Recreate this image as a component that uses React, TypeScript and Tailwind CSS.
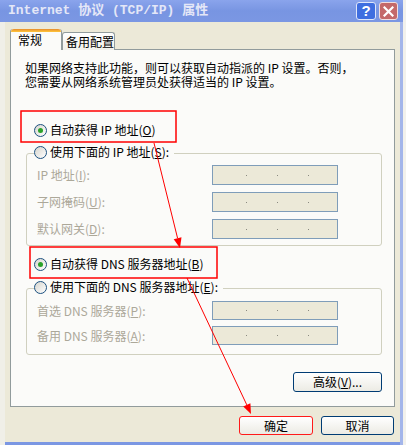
const Radio = ({ checked = false }: { checked?: boolean }) => (
  <span className="flex h-[13px] w-[13px] shrink-0 items-center justify-center rounded-full border border-[#1c5180] bg-linear-to-br from-[#d6d5ce] to-white">
    {checked && <span className="h-[5px] w-[5px] rounded-full bg-[#2aa22a]" />}
  </span>
);

const IpField = () => (
  <div className="flex h-full w-[126px] items-center border border-[#7f9db9] bg-[#ece9d8]">
    <span className="w-[33px]" />
    <span className="h-px w-px bg-[#8a8a80]" />
    <span className="w-[30px]" />
    <span className="h-px w-px bg-[#8a8a80]" />
    <span className="w-[30px]" />
    <span className="h-px w-px bg-[#8a8a80]" />
  </div>
);

const FieldRow = ({ label, mnemonic, tall }: { label: string; mnemonic: string; tall?: boolean }) => (
  <div className={tall ? "flex h-[20px] items-stretch" : "flex h-[19px] items-stretch"}>
    <span className="flex w-[185px] items-center pl-[10px] text-[#aca899]">
      {label}(<u>{mnemonic}</u>):
    </span>
    <IpField />
  </div>
);

const Option = ({ checked, children }: { checked?: boolean; children: React.ReactNode }) => (
  <div className="flex h-[16px] items-center gap-[3px]">
    <Radio checked={checked} />
    <span className="whitespace-pre">{children}</span>
  </div>
);

const XpButton = ({ children, className }: { children: React.ReactNode; className: string }) => (
  <button className={`flex items-center justify-center rounded-[3px] border bg-linear-to-b from-white to-[#ecebe4] text-[12px] text-black ${className}`}>
    {children}
  </button>
);

export default function App() {
  return (
    <div className="relative h-[445px] w-[406px] overflow-hidden bg-[#f2f1ec] font-['Noto_Sans_CJK_SC',sans-serif] text-[12px] leading-[16px] text-black">
      <div className="w-[403px]">
        {/* Title bar */}
        <div className="flex h-[22px] items-center bg-linear-to-b from-[#8aa4ec] via-[#7895e2] to-[#7b97e3] pl-[8px] pr-[5px]">
          <span className="whitespace-pre font-['Liberation_Mono','Noto_Sans_CJK_SC',monospace] text-[13px] font-bold text-[#e4e7f7]">
            Internet 协议 (TCP/IP) 属性
          </span>
          <div className="ml-auto flex gap-[3px]">
            <div className="flex h-[18px] w-[20px] items-center justify-center rounded-[3px] border border-[#dfe6fa] bg-[#3f6ee0] font-['Liberation_Sans',sans-serif] text-[15px] font-bold text-white">
              ?
            </div>
            <div className="flex h-[18px] w-[19px] items-center justify-center rounded-[3px] border border-[#f1dede] bg-[#c4696a]">
              <svg width="11" height="11" viewBox="0 0 11 11">
                <path d="M1.5 1.5 L9.5 9.5 M9.5 1.5 L1.5 9.5" stroke="white" strokeWidth="2.2" strokeLinecap="square" />
              </svg>
            </div>
          </div>
        </div>

        {/* Body */}
        <div className="flex">
          <div className="w-[5px] bg-[#f0efe8]" />
          <div className="h-[423px] w-[395px] border-b-[3px] border-[#7b97e3] bg-[#ece9d8] px-[5px]">
            {/* Tabs */}
            <div className="relative z-10 -mb-px mt-[7px] flex items-end">
              <div className="flex h-[21px] w-[52px] flex-col rounded-t-[3px] border-x border-[#919b9c] bg-[#fbfbf9]">
                <div className="h-[3px] rounded-t-[3px] bg-linear-to-b from-[#e68b2c] to-[#ffc73c]" />
                <span className="pl-[7px] leading-[16px]">常规</span>
              </div>
              <div className="flex h-[18px] w-[53px] items-center rounded-t-[3px] border-x border-t border-[#919b9c] bg-linear-to-b from-white to-[#f1f0ea] pl-[3px]">
                备用配置
              </div>
            </div>

            {/* Panel */}
            <div className="h-[358px] w-[385px] border border-[#919b9c] bg-[#fbfbf9]">
              <p className="ml-[14px] mt-[11px] whitespace-nowrap leading-[14px]">
                如果网络支持此功能，则可以获取自动指派的 IP 设置。否则，
                <br />
                您需要从网络系统管理员处获得适当的 IP 设置。
              </p>

              <div className="ml-[23px] mt-[33px]">
                <Option checked>
                  自动获得 IP 地址(<u>O</u>)
                </Option>
              </div>

              {/* IP group */}
              <div className="ml-[15px] mt-[15px] w-[356px] rounded-[3px] border border-[#d0d0bf] pb-[6px]">
                <div className="-mt-[10px] ml-[7px] w-fit bg-[#fbfbf9] pr-[5px]">
                  <Option>
                    使用下面的 IP 地址(<u>S</u>):
                  </Option>
                </div>
                <div className="mt-[5px] flex flex-col gap-[7px]">
                  <FieldRow label="IP 地址" mnemonic="I" tall />
                  <FieldRow label="子网掩码" mnemonic="U" tall />
                  <FieldRow label="默认网关" mnemonic="D" tall />
                </div>
              </div>

              <div className="ml-[23px] mt-[10px]">
                <Option checked>
                  自动获得 DNS 服务器地址(<u>B</u>)
                </Option>
              </div>

              {/* DNS group */}
              <div className="ml-[15px] mt-[16px] w-[356px] rounded-[3px] border border-[#d0d0bf] pb-[9px]">
                <div className="-mt-[10px] ml-[7px] w-fit bg-[#fbfbf9] pr-[5px]">
                  <Option>
                    使用下面的 DNS 服务器地址(<u>E</u>):
                  </Option>
                </div>
                <div className="mt-[6px] flex flex-col gap-[6px]">
                  <FieldRow label="首选 DNS 服务器" mnemonic="P" />
                  <FieldRow label="备用 DNS 服务器" mnemonic="A" />
                </div>
              </div>

              <div className="ml-[282px] mt-[17px]">
                <XpButton className="h-[20px] w-[89px] border-[#003c74]">
                  高级(<u>V</u>)...
                </XpButton>
              </div>
            </div>

            {/* Dialog buttons */}
            <div className="mt-[9px] flex justify-end gap-[8px] pr-[1px]">
              <XpButton className="h-[19px] w-[74px] border-[#ff1a1a]">确定</XpButton>
              <XpButton className="h-[19px] w-[73px] border-[#003c74]">取消</XpButton>
            </div>
          </div>
          <div className="w-[3px] bg-[#a3b5ea]" />
        </div>
      </div>

      {/* Red annotation marks over the dialog */}
      <svg className="pointer-events-none absolute inset-0" width="406" height="445" viewBox="0 0 406 445">
        <rect x="21" y="111" width="155" height="31" fill="none" stroke="#ff0000" strokeWidth="1.5" />
        <rect x="30" y="247" width="187" height="31" fill="none" stroke="#ff0000" strokeWidth="1.5" />
        <line x1="154" y1="143" x2="177.6" y2="238.3" stroke="#ff0000" strokeWidth="1" />
        <polygon points="180,248 181.5,237.3 173.7,239.3" fill="#ff0000" />
        <line x1="187" y1="278" x2="246.8" y2="404.9" stroke="#ff0000" strokeWidth="1" />
        <polygon points="251,414 250.4,403.2 243.2,406.6" fill="#ff0000" />
      </svg>
    </div>
  );
}
